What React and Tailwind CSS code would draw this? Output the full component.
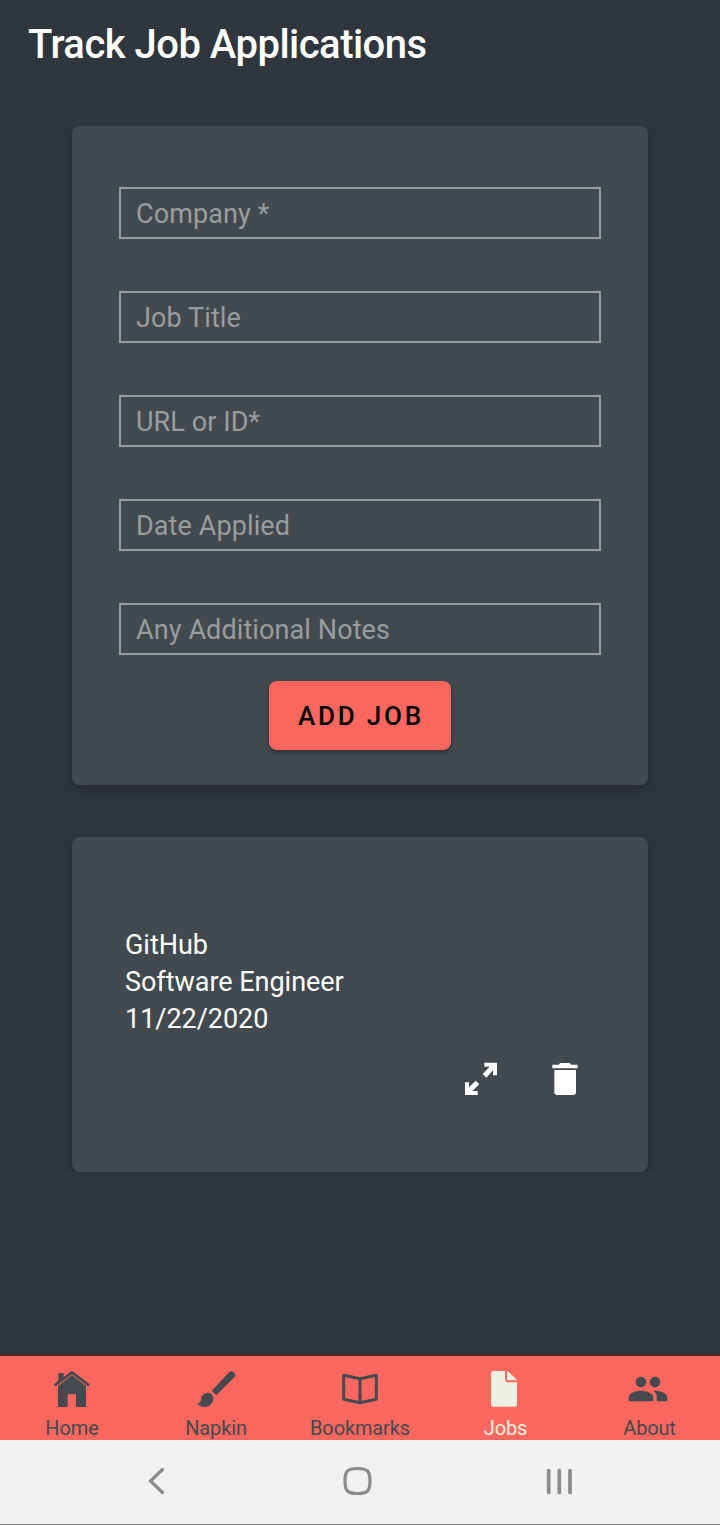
import { MdPeople } from "react-icons/md";

const fields = ["Company *", "Job Title", "URL or ID*", "Date Applied", "Any Additional Notes"];

function HomeIcon() {
  return (
    <svg viewBox="0 0 120 120" className="size-10" fill="currentColor">
      <path d="M19 12H35V30L19 43Z" />
      <path d="M8 49L60 10L111 49" fill="none" stroke="currentColor" strokeWidth="8" />
      <path d="M60 18L102 51V114H72V76H47V114H18V51Z" />
    </svg>
  );
}

function BrushIcon() {
  return (
    <svg viewBox="0 0 120 120" className="size-10" fill="currentColor">
      <path d="M47 65L100 9Q106 4 112 9L116 13Q121 18 116 24L61 79Z" />
      <path d="M4 104C14 102 14 96 16 88C18 76 28 71 37 71C46 72 52 79 52 88C52 104 40 114 26 114C17 114 9 110 4 104Z" />
    </svg>
  );
}

function BookIcon() {
  return (
    <svg viewBox="0 0 120 120" className="size-10" fill="none" stroke="currentColor" strokeWidth="9" strokeLinejoin="round">
      <path d="M11 19L60 29L109 19V91L60 101L11 91ZM60 29V101" />
    </svg>
  );
}

function DocumentIcon() {
  return (
    <svg viewBox="0 0 120 120" className="size-10" fill="currentColor">
      <path d="M27 6H63V29Q63 40 73 40H99V107Q99 113 93 113H27Q21 113 21 107V12Q21 6 27 6Z" />
      <path d="M69 7H72L99 32V34H74Q69 34 69 29Z" />
    </svg>
  );
}

function ExpandIcon() {
  return (
    <svg viewBox="0 0 120 120" className="size-10" fill="currentColor">
      <path d="M70 11H108V49H96V34L76 56L65 45L86 23H70Z" />
      <path d="M50 108H12V70H24V85L44 65L55 76L34 96H50Z" />
    </svg>
  );
}

function TrashIcon() {
  return (
    <svg viewBox="0 0 120 120" className="size-10" fill="currentColor">
      <path d="M22 17H41Q44 12 48 12H72Q76 12 79 17H98V28H22Z" />
      <path d="M28 33H93V99Q93 108 84 108H37Q28 108 28 99Z" />
    </svg>
  );
}

const tabs = [
  { label: "Home", icon: <HomeIcon /> },
  { label: "Napkin", icon: <BrushIcon /> },
  { label: "Bookmarks", icon: <BookIcon /> },
  { label: "Jobs", icon: <DocumentIcon />, active: true, shift: true },
  { label: "About", icon: <MdPeople className="size-[42px] shrink-0" />, shift: true },
];

export default function App() {
  return (
    <div className="flex h-[1525px] w-[720px] flex-col overflow-hidden bg-[#2f363d] font-['Roboto',sans-serif]">
      <header className="flex h-[90px] shrink-0 items-center pl-7">
        <h1 className="text-[40px] leading-[48px] font-medium tracking-[-0.52px] text-white">Track Job Applications</h1>
      </header>

      <main className="flex h-[1082px] shrink-0 flex-col gap-[52px] overflow-hidden px-[72px] pt-9">
        <form className="flex h-[659px] shrink-0 flex-col items-center rounded-lg bg-[#424a4f] px-[47px] pt-[61px] shadow-[0_5px_14px_rgba(0,0,0,0.24)]">
          <div className="flex w-full flex-col gap-[52px]">
            {fields.map((label) => (
              <input
                key={label}
                placeholder={label}
                className="h-[52px] w-full border-2 border-[#969b9d] bg-transparent px-[15px] pt-0.5 text-[27px] tracking-[0.1px] text-white placeholder:text-[#9a9d9e]"
              />
            ))}
          </div>
          <button type="button" className="mt-[26px] h-[69px] w-[182px] rounded-lg bg-[#fa675e] pt-0.5 pl-0.5 text-[26px] font-medium tracking-[2.8px] text-black shadow-[0_2px_4px_rgba(0,0,0,0.35)]">
            ADD JOB
          </button>
        </form>

        <article className="flex h-[335px] shrink-0 flex-col rounded-lg bg-[#424a4f] pt-[90px] shadow-[0_5px_14px_rgba(0,0,0,0.24)]">
          <div className="pl-[53px] text-[27px] leading-[37px] tracking-[-0.03px] text-white">
            <p>GitHub</p>
            <p>Software Engineer</p>
            <p>11/22/2020</p>
          </div>
          <div className="mt-[21px] flex justify-end gap-11 pr-[63px] text-white">
            <button type="button" aria-label="Expand"><ExpandIcon /></button>
            <button type="button" aria-label="Delete"><TrashIcon /></button>
          </div>
        </article>
      </main>

      <nav className="mt-auto flex h-[86px] shrink-0 border-t-2 border-[#50272a] bg-[#fa675e]">
        {tabs.map(({ label, icon, active, shift }) => (
          <a key={label} className={active ? "flex w-36 flex-col items-center pt-[13px] text-[#eef0e2]" : "flex w-36 flex-col items-center pt-[13px] text-[#464a4f]"}>
            <span className="flex h-10 items-center">{icon}</span>
            <span className={shift ? "mt-[7px] pl-[3px] text-[20px] leading-6 tracking-[-0.15px]" : "mt-[7px] text-[20px] leading-6 tracking-[-0.12px]"}>{label}</span>
          </a>
        ))}
      </nav>

      <footer className="flex h-[85px] shrink-0 items-start gap-[161px] border-b border-[#777777] bg-[#f1f1f1] pt-[21px] pl-[137px] text-[#8b8b8b]">
        <svg viewBox="0 0 40 40" className="size-10" fill="none" stroke="currentColor" strokeWidth="3.200" strokeLinecap="round">
          <path d="M25.500 8.500L13.500 20L25.500 31.500" />
        </svg>
        <svg viewBox="0 0 40 40" className="size-10" fill="none" stroke="currentColor" strokeWidth="3.200">
          <path d="M19.500 7.500C29.500 7.500 32 10 32 20C32 30 29.500 32.500 19.500 32.500C9.500 32.500 7 30 7 20C7 10 9.500 7.500 19.500 7.500Z" />
        </svg>
        <svg viewBox="0 0 40 40" className="size-10" fill="none" stroke="currentColor" strokeWidth="3.700" strokeLinecap="round">
          <path d="M9.700 9.500V31.500M20.300 9.500V31.500M31 9.500V31.500" />
        </svg>
      </footer>
    </div>
  );
}
